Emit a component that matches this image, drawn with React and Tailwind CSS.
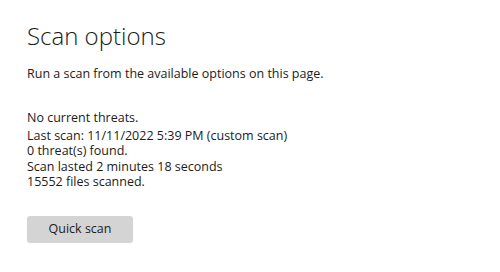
export default function App() {
  const detalhes = [
    "Last scan: 11/11/2022 5:39 PM (custom scan)",
    "0 threat(s) found.",
    "Scan lasted 2 minutes 18 seconds",
    "15552 files scanned.",
  ];

  return (
    <div
      className="h-[272px] w-[500px] bg-white pl-[27px] pt-[20px] text-[#1b1b1b]"
      style={{ fontFamily: '"Open Sans", "Noto Sans", sans-serif' }}
    >
      <h1 className="text-[24px] font-light leading-[32px]">Scan options</h1>
      <p className="mt-[14px] text-[12.5px] leading-[16px]">
        Run a scan from the available options on this page.
      </p>

      <div className="mt-[28px] text-[12.5px] leading-[15.5px]">
        <p className="mb-[2px]">No current threats.</p>
        {detalhes.map((linha) => (
          <p key={linha}>{linha}</p>
        ))}
      </div>

      <button className="mt-[26px] h-[27px] w-[106px] rounded-[3px] bg-[#d4d4d4] text-[12.5px] text-[#1b1b1b]">
        Quick scan
      </button>
    </div>
  );
}
